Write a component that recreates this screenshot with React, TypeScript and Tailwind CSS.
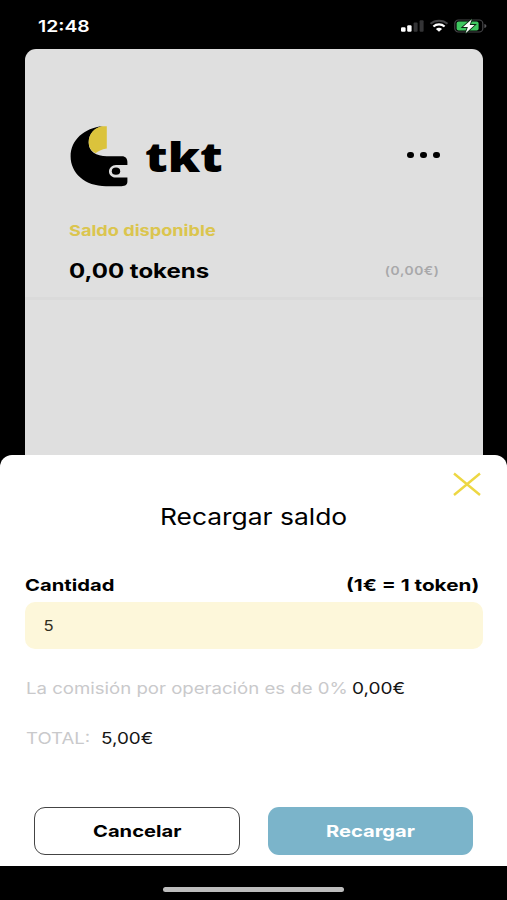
import { useState } from 'react';
import { clsx } from 'clsx';

interface WideTextProps {
  children: string;
  className?: string;
}

// Extended lettering: Inter stretched horizontally from its left edge
const WideText = ({ children, className }: WideTextProps) => (
  <span className={clsx('inline-block whitespace-pre', className)}>{children}</span>
);

const StatusBar = () => (
  <div className="flex h-[49px] shrink-0 items-start justify-between pl-[38px] pr-[20px] text-white">
    <WideText className="mt-4 origin-left scale-x-[1.21] text-base leading-5 font-semibold">12:48</WideText>
    <div className="mt-[18px] flex h-4 items-center">
      <svg width="24" height="14" viewBox="0 0 24 14">
        <rect x="0" y="8.2" width="4.6" height="4.6" rx="1.2" fill="#fff" />
        <rect x="6.2" y="6.2" width="4.4" height="6.6" rx="1.2" fill="#fff" />
        <rect x="12.6" y="3.6" width="4" height="9.2" rx="1" fill="#343436" />
        <rect x="18.6" y="1.2" width="4" height="11.6" rx="1" fill="#343436" />
      </svg>
      <svg className="ml-[4px]" width="20" height="14" viewBox="0 0 20 14" fill="none">
        <path d="M1.5 4.8C6 0.7 14 0.7 18.5 4.8" stroke="#444446" strokeWidth="2" />
        <path d="M4.4 7.5C7.6 4.6 12.4 4.6 15.6 7.5" stroke="#fff" strokeWidth="2.2" />
        <path d="M6.9 9.9c1.8-1.5 4.4-1.5 6.2 0L10 12.8z" fill="#fff" />
      </svg>
      <svg className="ml-[5px]" width="33" height="16" viewBox="0 0 33 16" fill="none">
        <rect x="0.8" y="2" width="28" height="12" rx="3.6" stroke="#464649" strokeWidth="1.2" />
        <rect x="2.6" y="3.6" width="22" height="8.8" rx="2" fill="#3fc860" />
        <path d="M30.4 6v4c1.2-.3 2-1.1 2-2s-.8-1.7-2-2z" fill="#57575a" />
        <path
          d="M17.8 1.2 9 9h4.9L11.6 15.2l9-8.2h-4.9z"
          fill="#fff"
          stroke="#0b2a12"
          strokeWidth="1.8"
          paintOrder="stroke"
        />
      </svg>
    </div>
  </div>
);

const Logo = () => (
  <div className="flex items-start">
    <svg className="ml-px" width="58" height="62" viewBox="0 0 58 62">
      <path
        d="M33 1C14 3 0.6 15 0.6 31.5C0.6 48 15 61.2 36 61.2H51.5C55.5 61.2 57.4 59.4 57.4 56.5V52.6H46C42 52.6 39 50 39 46.5C39 43 42 40 46 40H57.4V37C57.4 33.5 55.5 31.2 52 31.2H37C26 31.2 18.7 26.5 18.7 17.5C18.7 9 24 3.5 33 1Z"
        fill="#000"
      />
      <path
        d="M36.8 1.2V23.6C31.5 24.6 28 26.2 25.6 28.2C21.2 26 18.7 22.5 18.7 17C18.7 9 24 2.5 32 1.2Z"
        fill="#dbc33c"
      />
      <ellipse cx="46" cy="46.2" rx="4.2" ry="3.6" fill="#000" />
    </svg>
    <span className="mt-[2px] ml-[17px] inline-block origin-left scale-x-[1.23] font-['Open_Sans',sans-serif] text-[40px] leading-[60px] font-extrabold">
      tkt
    </span>
  </div>
);

const BalanceCard = () => (
  <div className="mx-[25px] flex h-[406px] w-[458px] shrink-0 flex-col rounded-t-[11px] bg-[#dfdfdf]">
    <div className="flex h-[251px] flex-col border-b-[3px] border-[#dadada] pr-[43px] pl-11">
      <div className="mt-[76px] flex h-[62px] items-start justify-between">
        <Logo />
        <div className="mt-[27px] flex gap-[6px]">
          <span className="h-[6px] w-[7px] rounded-full bg-black" />
          <span className="h-[6px] w-[7px] rounded-full bg-black" />
          <span className="h-[6px] w-[7px] rounded-full bg-black" />
        </div>
      </div>
      <WideText className="mt-[34px] origin-left scale-x-[1.21] self-start text-[15px] leading-5 font-bold text-[#dbc54e]">
        Saldo disponible
      </WideText>
      <div className="mt-4 flex items-center justify-between">
        <WideText className="origin-left scale-x-[1.2] text-xl leading-7 font-bold">0,00 tokens</WideText>
        <WideText className="-mt-px origin-right scale-x-[1.15] text-xs leading-5 font-semibold tracking-[0.5px] text-[#a8a8aa]">
          (0,00€)
        </WideText>
      </div>
    </div>
  </div>
);

const RechargeSheet = () => {
  const [amount, setAmount] = useState('5');
  const total = (Number(amount.replace(',', '.')) || 0).toFixed(2).replace('.', ',');

  return (
    <div className="flex h-[411px] shrink-0 flex-col rounded-t-xl bg-white px-[25px]">
      <button className="mt-[17px] mr-px h-6 w-7 self-end" aria-label="Cerrar">
        <svg width="28" height="24" viewBox="0 0 28 24" fill="none" stroke="#edd743" strokeWidth="2.4">
          <path d="M1 1.5 27 23M27 1.5 1 23" />
        </svg>
      </button>
      <h2 className="mt-[5px] text-center text-[23px] leading-8">
        <WideText className="scale-x-[1.148]">Recargar saldo</WideText>
      </h2>

      <div className="mt-10 flex justify-between text-[16.5px] leading-6 font-bold">
        <WideText className="origin-left scale-x-[1.225]">Cantidad</WideText>
        <WideText className="mr-[3px] origin-right scale-x-[1.255]">(1€ = 1 token)</WideText>
      </div>
      <div className="mt-[5px] h-[47px] w-[458px] rounded-[10px] bg-[#fdf7da]">
        <input
          className="h-[47px] w-[360px] origin-left scale-x-[1.15] bg-transparent pl-4 text-[14.5px] text-[#33301f] outline-none"
          value={amount}
          onChange={(e) => setAmount(e.target.value)}
        />
      </div>

      <div className="mt-[27px] flex pl-px text-base leading-6">
        <WideText className="w-[326px] origin-left scale-x-[1.162] text-[#c9c9cb]">La comisión por operación es de 0%</WideText>
        <WideText className="origin-left scale-x-[1.19] text-[#161616]">0,00€</WideText>
      </div>
      <div className="mt-[26px] flex pl-px text-base leading-6">
        <WideText className="w-[75px] origin-left scale-x-[1.16] text-[#c9c9cb]">TOTAL:</WideText>
        <WideText className="origin-left scale-x-[1.18] text-[#161616]">{`${total}€`}</WideText>
      </div>

      <div className="mt-[57px] ml-[9px] flex gap-[28px] text-[16.5px] font-bold">
        <button className="h-12 w-[206px] rounded-[11px] border-[1.5px] border-[#444] bg-white pt-px">
          <WideText className="scale-x-[1.22]">Cancelar</WideText>
        </button>
        <button className="h-12 w-[205px] rounded-[11px] bg-[#7bb4ca] pt-px text-white">
          <WideText className="scale-x-[1.22]">Recargar</WideText>
        </button>
      </div>
    </div>
  );
};

export default function App() {
  return (
    <div className="flex h-[900px] w-[507px] flex-col overflow-hidden bg-black font-['Inter',sans-serif] text-black">
      <StatusBar />
      <BalanceCard />
      <RechargeSheet />
      <div className="flex h-[34px] justify-center pt-[21px]">
        <div className="h-[5px] w-[181px] rounded-full bg-[#bdbdbd]" />
      </div>
    </div>
  );
}
